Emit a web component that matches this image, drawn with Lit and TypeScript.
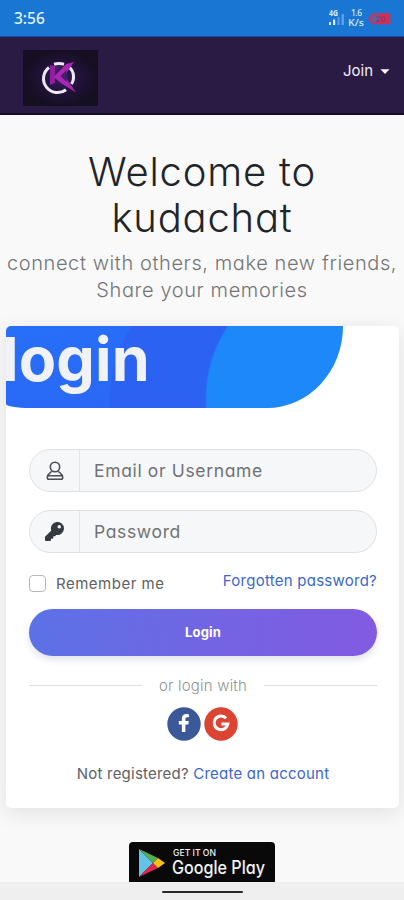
import { LitElement, html, css } from 'lit';
import { customElement, property } from 'lit/decorators.js';

@customElement('status-bar')
export class StatusBar extends LitElement {
  static styles = css`
    :host {
      display: flex;
      box-sizing: border-box;
      height: 37px;
      padding: 0 11px 0 14px;
      align-items: center;
      justify-content: space-between;
      background: #1976d2;
      border-bottom: 1px solid #21469a;
      color: #e3f3ff;
    }
    .time {
      font: 500 15.5px/20px 'Noto Sans', sans-serif;
    }
    .icons {
      display: block;
    }
  `;

  render() {
    return html`
      <span class="time">3:56</span>
      <svg class="icons" width="66" height="22" viewBox="0 0 66 22" font-family="Noto Sans, sans-serif" fill="#d9efff">
        <text x="2" y="8.5" font-size="8" font-weight="700" textLength="9" lengthAdjust="spacingAndGlyphs">4G</text>
        <path d="M2 15h2v3H2zM6 12.5h2.2V18H6z" />
        <path d="M10.500 10h2v8h-2zM14.500 7h2.500v11h-2.500z" fill="#5a9fe3" />
        <text x="24" y="9" font-size="8.5" font-weight="500" textLength="11">1.6</text>
        <text x="21" y="19" font-size="8.5" font-weight="500" textLength="16" lengthAdjust="spacingAndGlyphs">K/s</text>
        <path d="M42 11.500l4-4.500h16.500v9.500H46z" fill="#6c5ba0" stroke="#d32f52" stroke-width="1.500" />
        <rect x="53" y="7" width="9" height="9.500" fill="#d32f52" />
        <text x="49" y="15" font-size="8" font-weight="700" fill="#8e3970">20</text>
      </svg>
    `;
  }
}

@customElement('site-header')
export class SiteHeader extends LitElement {
  static styles = css`
    :host {
      display: flex;
      box-sizing: border-box;
      height: 78px;
      padding: 13px 14px 0 23px;
      justify-content: space-between;
      align-items: flex-start;
      background: #2a1b45;
      border-bottom: 2px solid #150d27;
    }
    .join {
      display: flex;
      align-items: center;
      gap: 7px;
      margin-top: 10px;
      color: #f2eff6;
      font: 400 15px/22px Inter, sans-serif;
    }
  `;

  render() {
    return html`
      <svg width="75" height="56" viewBox="0 0 75 56">
        <defs>
          <radialGradient id="glow">
            <stop offset="0" stop-color="#3a1c5c" />
            <stop offset="0.5" stop-color="#21133a" />
            <stop offset="1" stop-color="#150f22" />
          </radialGradient>
        </defs>
        <rect width="75" height="56" fill="url(#glow)" />
        <path
          d="M31 14.200Q36 12.800 41 14.200M26 17.500A13.500 13.500 0 0 0 43 39.700M46.500 17.200A13.500 13.500 0 0 1 48.500 34"
          fill="none"
          stroke="#efe8fa"
          stroke-width="3"
        />
        <path d="M27 15l5 1v17l-5 2z" fill="#8f1f9c" />
        <path d="M51 12l-8 2L30.500 27l8 6.500L53 42.500 41.500 26z" fill="#a827b4" />
        <path d="M32 16v8l7-8zM37.500 26l6-6v12z" fill="#45206a" />
      </svg>
      <div class="join">
        <span>Join</span>
        <svg width="10" height="5" viewBox="0 0 10 5"><path d="M.5.3h9L5 4.900z" fill="#fff" /></svg>
      </div>
    `;
  }
}

@customElement('form-field')
export class FormField extends LitElement {
  @property() label = '';

  static styles = css`
    :host {
      display: flex;
      box-sizing: border-box;
      height: 43px;
      border: 1px solid #dfe0e2;
      border-radius: 22px;
      background: #f6f7f8;
      align-items: stretch;
      overflow: hidden;
    }
    .icon {
      display: flex;
      width: 49px;
      align-items: center;
      justify-content: center;
      border-right: 1px solid #e3e4e6;
    }
    .label {
      padding-left: 14px;
      color: #6f7377;
      font: 400 17.5px/41px Inter, sans-serif;
      font-feature-settings: 'cv11';
      letter-spacing: 0.65px;
    }
  `;

  render() {
    return html`
      <span class="icon"><slot></slot></span>
      <span class="label">${this.label}</span>
    `;
  }
}

@customElement('app-root')
export class AppRoot extends LitElement {
  static styles = css`
    :host {
      display: flex;
      flex-direction: column;
      height: 900px;
      overflow: hidden;
      background: #f9f9f9;
      color: #212529;
      font-family: Inter, sans-serif;
      font-feature-settings: 'cv11';
    }
    h1 {
      margin: 34px 0 0;
      font-size: 40px;
      font-weight: 300;
      line-height: 46px;
      letter-spacing: 0.8px;
      text-align: center;
    }
    .lead {
      margin: 9px 0 0;
      color: #737577;
      font-size: 20px;
      font-weight: 300;
      line-height: 27px;
      letter-spacing: 0.6px;
      text-align: center;
      white-space: nowrap;
    }
    .card {
      display: flex;
      flex-direction: column;
      height: 482px;
      margin: 22px 5px 0 6px;
      border-radius: 5px;
      background: #fff;
      box-shadow: 0 5px 22px rgba(0, 0, 0, 0.1);
      overflow: hidden;
      flex: none;
    }
    .banner {
      width: 337px;
      height: 82px;
      border-radius: 0 0 76px 24px / 0 0 82px 4px;
      background:
        radial-gradient(circle at 329px 72px, #1c88fa 128px, transparent 130px),
        radial-gradient(circle at 234px 72px, #2b62f1 129px, transparent 131px),
        linear-gradient(170deg, #276ff9, #2a65f3);
      overflow: hidden;
    }
    .banner-text {
      display: block;
      margin-left: -4px;
      color: #f1f2f5;
      font-size: 61px;
      font-weight: 700;
      line-height: 66px;
      letter-spacing: 0.2px;
      white-space: nowrap;
    }
    .form {
      display: flex;
      flex-direction: column;
      padding: 41px 22px 0 23px;
    }
    .password {
      margin-top: 18px;
    }
    .options {
      display: flex;
      height: 56px;
      justify-content: space-between;
      align-items: center;
      font-size: 15px;
    }
    .remember {
      display: flex;
      align-items: center;
      gap: 10px;
      margin-top: 5px;
      color: #5e6164;
      letter-spacing: 0.5px;
    }
    .box {
      width: 15px;
      height: 15px;
      border: 1px solid #b5b7ba;
      border-radius: 4px;
      background: #fff;
    }
    .link {
      color: #3c67cb;
    }
    .options .link {
      margin-bottom: 1px;
      letter-spacing: 0.25px;
    }
    .login {
      height: 47px;
      padding: 0;
      border: 0;
      border-radius: 24px;
      background: linear-gradient(100deg, #5b72e6, #7464e3 55%, #825ae1);
      box-shadow: 0 4px 7px rgba(40, 50, 100, 0.13);
      color: #fff;
      font: 700 13px/47px Inter, sans-serif;
      font-feature-settings: 'cv11';
      letter-spacing: 0.2px;
    }
    .divider {
      display: flex;
      align-items: center;
      gap: 17px;
      height: 24px;
      margin-top: 17px;
      color: #919394;
      font-size: 15px;
      font-weight: 300;
      letter-spacing: 0.2px;
    }
    .divider::before,
    .divider::after {
      content: '';
      flex: 1;
      height: 1px;
      background: #dedede;
    }
    .social {
      display: flex;
      justify-content: center;
      gap: 3px;
      margin: 10px 2px 0 0;
      height: 34px;
    }
    .register {
      margin: 15px 0 0;
      color: #5e6164;
      font-size: 15px;
      line-height: 36px;
      letter-spacing: 0.22px;
      text-align: center;
      white-space: nowrap;
    }
    .store {
      display: flex;
      justify-content: center;
      margin-top: 34px;
      height: 40px;
    }
    .nav {
      display: flex;
      flex: 1;
      justify-content: center;
      align-items: center;
      padding-top: 2px;
      background: #efefef;
    }
    .handle {
      width: 81px;
      height: 2px;
      border-radius: 1px;
      background: #292929;
    }
  `;

  render() {
    return html`
      <status-bar></status-bar>
      <site-header></site-header>
      <h1>Welcome to<br />kudachat</h1>
      <p class="lead">connect with others, make new friends,<br />Share your memories</p>
      <section class="card">
        <div class="banner"><span class="banner-text">login</span></div>
        <div class="form">
          <form-field label="Email or Username">
            <svg width="18" height="20" viewBox="0 0 18 20" fill="none" stroke="#4b4f54" stroke-width="1.600">
              <circle cx="9" cy="6" r="4.700" />
              <path d="M5.600 10.200C4.600 12.500 1.300 12.500 1.300 16.400q0 1.800 1.600 1.800h12.200q1.600 0 1.600-1.800c0-3.900-3.300-3.900-4.300-6.200M1.800 14.800h14.400" />
            </svg>
          </form-field>
          <form-field class="password" label="Password">
            <svg width="19" height="19" viewBox="0 0 512 512" fill="#343a40">
              <path d="M512 176a176 176 0 0 1-209 173l-24 27a24 24 0 0 1-18 8h-37v40a24 24 0 0 1-24 24h-40v40a24 24 0 0 1-24 24H24a24 24 0 0 1-24-24v-78a24 24 0 0 1 7-17l162-162A176 176 0 1 1 512 176zM336 128a48 48 0 1 0 96 0 48 48 0 1 0-96 0z" />
            </svg>
          </form-field>
          <div class="options">
            <label class="remember"><span class="box"></span>Remember me</label>
            <a class="link">Forgotten password?</a>
          </div>
          <button class="login">Login</button>
          <div class="divider">or login with</div>
          <div class="social">
            <svg width="34" height="34" viewBox="0 0 34 34">
              <circle cx="17" cy="17" r="16.700" fill="#3b5998" />
              <path d="M14.900 25v-7.400h-3.100v-3.500h3.100v-2.600c0-3 1.800-4.500 4.400-4.500l2.600.2v3.100h-1.600c-1.500 0-1.900.8-1.900 1.700v2.100h3.400l-.5 3.500h-2.900V25z" fill="#fff" />
            </svg>
            <svg width="34" height="34" viewBox="0 0 34 34">
              <circle cx="17" cy="17" r="16.700" fill="#dc4332" />
              <path d="M22.100 11.200a6.900 6.900 0 1 0 1.700 5.900h-6.400" fill="none" stroke="#fff" stroke-width="3" />
            </svg>
          </div>
          <p class="register">Not registered? <a class="link">Create an account</a></p>
        </div>
      </section>
      <div class="store">
        <svg width="146" height="40" viewBox="0 0 146 40">
          <path d="M0 40V4q0-4 4-4h138q4 0 4 4v36z" fill="#090909" />
          <path d="M10 7v28l14-14z" fill="#62c3e7" />
          <path d="M10 7l14 14 5-5z" fill="#55ae53" />
          <path d="M10 35l14-14 5 5z" fill="#df264e" />
          <path d="M29 16l7 5-7 5-5-5z" fill="#fbc112" />
          <g fill="#f2f2f2" font-family="Inter, sans-serif">
            <text x="44" y="14" font-size="9" font-weight="500" textLength="43" lengthAdjust="spacingAndGlyphs">GET IT ON</text>
            <text x="43" y="32" font-size="18" font-weight="500" textLength="93" lengthAdjust="spacingAndGlyphs">Google Play</text>
          </g>
        </svg>
      </div>
      <div class="nav"><span class="handle"></span></div>
    `;
  }
}
